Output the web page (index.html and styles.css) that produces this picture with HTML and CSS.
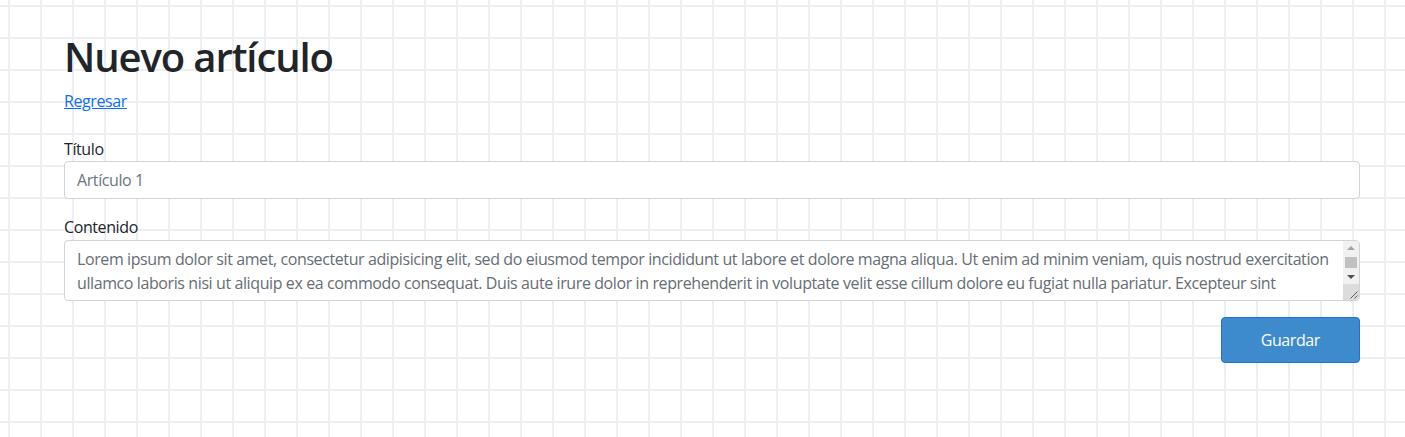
FILE: index.html
```html
<!DOCTYPE html>
<html lang="es">
<head>
<meta charset="utf-8">
<title>Nuevo artículo</title>
<link rel="stylesheet" href="styles.css">
</head>
<body>
<main class="page">
  <h1 class="title">Nuevo artículo</h1>
  <a class="back" href="#">Regresar</a>
  <form class="form">
    <div class="field">
      <label class="label" for="titulo">Título</label>
      <input class="control" id="titulo" type="text" placeholder="Artículo 1">
    </div>
    <div class="field">
      <label class="label" for="contenido">Contenido</label>
      <div class="area-wrap">
        <textarea class="control area" id="contenido" rows="2">Lorem ipsum dolor sit amet, consectetur adipisicing elit, sed do eiusmod tempor incididunt ut labore et dolore magna aliqua. Ut enim ad minim veniam, quis nostrud exercitation ullamco laboris nisi ut aliquip ex ea commodo consequat. Duis aute irure dolor in reprehenderit in voluptate velit esse cillum dolore eu fugiat nulla pariatur. Excepteur sint occaecat cupidatat non proident, sunt in culpa qui officia deserunt mollit anim id est laborum.</textarea>
        <div class="vscroll" aria-hidden="true">
          <div class="sb-btn">
            <svg width="8" height="4" viewBox="0 0 8 4"><polygon points="0,4 8,4 4,0" fill="#a3a3a3"/></svg>
          </div>
          <div class="sb-track"><div class="sb-thumb"></div></div>
          <div class="sb-btn">
            <svg width="8" height="4" viewBox="0 0 8 4"><polygon points="0,0 8,0 4,4" fill="#505050"/></svg>
          </div>
          <div class="sb-corner">
            <svg width="16" height="16" viewBox="0 0 16 16"><path d="M14.5 7.5 L7.5 14.5 M14.5 11.5 L11.5 14.5" stroke="#5a5a5a" stroke-width="1" fill="none"/></svg>
          </div>
        </div>
      </div>
    </div>
    <div class="actions">
      <button class="btn" type="button">Guardar</button>
    </div>
  </form>
</main>
</body>
</html>
```
FILE: styles.css
```css
html {
  background-color: #ffffff;
  background-image:
    linear-gradient(to right, #eceef1 2px, transparent 2px),
    linear-gradient(to bottom, #eceef1 2px, transparent 2px);
  background-size: 32px 32px;
  background-position: 8px 5px;
  min-height: 100%;
}

body {
  margin: 0;
  font-family: "Open Sans", "Noto Sans", sans-serif;
  font-size: 16px;
  line-height: 24px;
  letter-spacing: -0.4px;
  color: #212529;
}

.page {
  width: 1296px;
  padding: 33px 0 0 64px;
  display: flex;
  flex-direction: column;
  align-items: flex-start;
}

.title {
  margin: 0 0 8px;
  font-size: 40px;
  line-height: 48px;
  font-weight: 600;
  letter-spacing: -1.1px;
  color: #212529;
}

.back {
  color: #0d6efd;
  text-decoration: underline;
}

.form {
  width: 100%;
  margin-top: 24px;
  display: flex;
  flex-direction: column;
  gap: 16px;
}

.field {
  display: flex;
  flex-direction: column;
}

.label {
  display: block;
}

.control {
  box-sizing: border-box;
  width: 100%;
  margin: 0;
  padding: 6px 12px;
  font-family: inherit;
  font-size: 16px;
  line-height: 24px;
  letter-spacing: inherit;
  color: #666d74;
  background: #ffffff;
  border: 1px solid #ced4da;
  border-radius: 4px;
  outline: none;
}

.control::placeholder {
  color: #6c757d;
  opacity: 1;
}

.area-wrap {
  position: relative;
  margin-top: 1px;
}

.area {
  display: block;
  height: 61px;
  padding-right: 28px;
  resize: none;
  overflow: hidden;
  scrollbar-width: none;
}

.vscroll {
  position: absolute;
  top: 1px;
  right: 1px;
  bottom: 1px;
  width: 16px;
  display: flex;
  flex-direction: column;
  background: #f1f1f1;
  border-top-right-radius: 3px;
  border-bottom-right-radius: 3px;
}

.sb-btn {
  height: 14px;
  display: flex;
  align-items: center;
  justify-content: center;
}

.sb-track {
  flex: 1;
  padding: 2px 2px;
  display: flex;
}

.sb-thumb {
  flex: 1;
  background: #c1c1c1;
}

.sb-corner {
  height: 16px;
  background: #dcdcdc;
  display: flex;
  border-bottom-right-radius: 3px;
}

.actions {
  display: flex;
  justify-content: flex-end;
}

.btn {
  box-sizing: border-box;
  height: 46px;
  padding: 10px 39px;
  font-family: inherit;
  font-size: 16px;
  line-height: 24px;
  letter-spacing: inherit;
  color: #ffffff;
  background: #3d8bcd;
  border: 1px solid #1c6fe0;
  border-radius: 4px;
  cursor: pointer;
}
```
